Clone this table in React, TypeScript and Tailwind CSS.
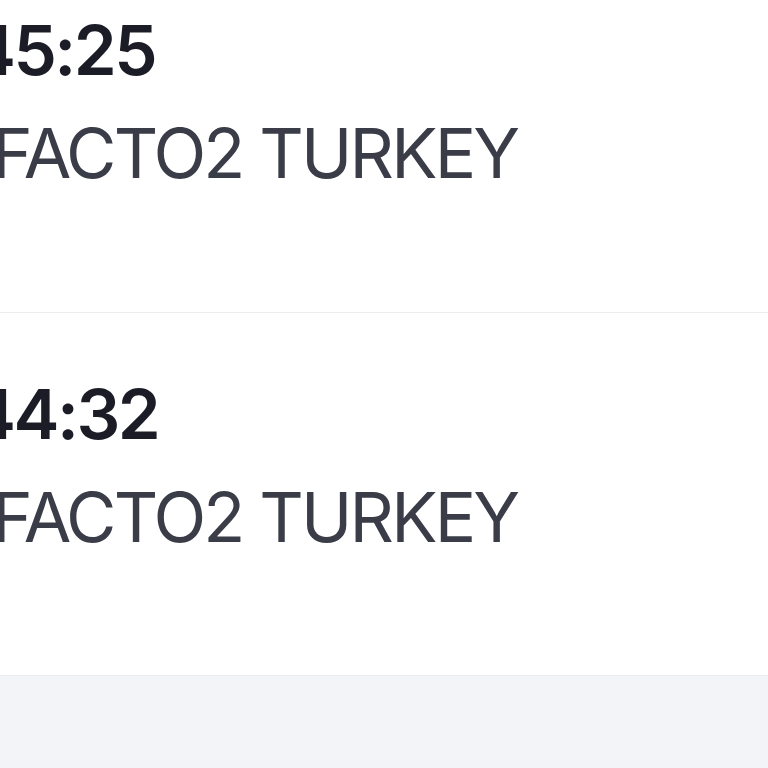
export default function App() {
  const rows = [
    { time: "45:25", name: "FACTO2 TURKEY", top: "pt-[16px]", h: "h-[313px]" },
    { time: "44:32", name: "FACTO2 TURKEY", top: "pt-[67px]", h: "h-[363px]" },
  ];
  return (
    <div className="w-[768px] h-[768px] overflow-hidden bg-[#f3f4f8] flex flex-col" style={{ fontFamily: "Inter, 'Noto Sans', sans-serif" }}>
      {rows.map((r, i) => (
        <div key={i} className={`${r.h} ${r.top} bg-white border-b border-[#ececef] flex flex-col shrink-0`}>
          <div className="ml-[-30px] text-[69px] leading-none font-semibold text-[#1b1c26] tracking-[-2.5px] whitespace-nowrap">{r.time}</div>
          <div className="ml-[-8px] mt-[34px] text-[69px] leading-none font-normal text-[#3a3c47] tracking-[-2.8px] whitespace-nowrap">{r.name}</div>
        </div>
      ))}
      <div className="flex-1" />
    </div>
  );
}
